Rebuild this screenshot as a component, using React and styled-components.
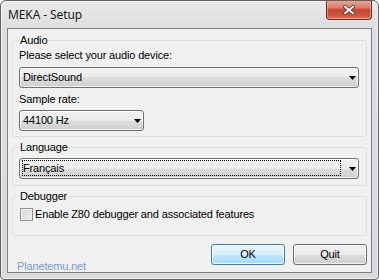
import React from "react";
import styled, { createGlobalStyle } from "styled-components";

const Global = createGlobalStyle`
  html, body { margin: 0; padding: 0; background: #ffffff; }
  #root { width: 379px; height: 280px; }
  * { box-sizing: border-box; }
`;

const Window = styled.div`
  width: 379px;
  height: 280px;
  border: 1px solid #5f6368;
  border-radius: 6px 6px 4px 4px;
  background: linear-gradient(to bottom, #e9e9e9 0px, #dedede 28px, #d9d9d9 100%);
  box-shadow: inset 0 0 0 1px rgba(255, 255, 255, 0.55);
  display: flex;
  flex-direction: column;
  overflow: hidden;
`;

const TitleBar = styled.div`
  height: 27px;
  display: flex;
  align-items: center;
  padding-left: 7px;
  flex-shrink: 0;
`;

const Title = styled.div`
  flex: 1;
  font-family: "Noto Sans", "Open Sans", sans-serif;
  font-size: 12px;
  color: #1a1a1a;
  letter-spacing: -0.1px;
  line-height: 16px;
`;

const CloseButton = styled.div`
  align-self: flex-start;
  margin-top: -1px;
  margin-right: 6px;
  width: 46px;
  height: 20px;
  border: 1px solid #6e2a22;
  border-top: none;
  border-radius: 0 0 4px 4px;
  background: linear-gradient(
    to bottom,
    #e9a99b 0%,
    #dc7d68 40%,
    #c7452d 52%,
    #cf5339 80%,
    #e07a5c 100%
  );
  box-shadow: inset 0 0 0 1px rgba(255, 210, 200, 0.45);
  display: flex;
  align-items: center;
  justify-content: center;
  padding-top: 1px;
`;

const Client = styled.div`
  flex: 1;
  margin: 0 6px 6px 6px;
  border: 1px solid #7d8085;
  background: #f0f0f0;
  display: flex;
  flex-direction: column;
  padding: 5px 4px 0 4px;
  font-family: "Liberation Sans", Arial, sans-serif;
  font-size: 11px;
  letter-spacing: -0.15px;
  color: #000;
`;

const Group = styled.fieldset`
  margin: ${(p) => (p.$first ? "0" : "4px")} 0 0 0;
  padding: ${(p) => p.$pad || "2px 6px 5px 6px"};
  border: 1px solid #d5dfe5;
  border-radius: 3px;
  min-width: 0;
  display: flex;
  flex-direction: column;
  align-items: flex-start;
`;

const Legend = styled.legend`
  padding: 0 1px;
  margin-left: 0;
  line-height: 13px;
  font-size: 11px;
  color: #000;
`;

const FieldLabel = styled.div`
  line-height: 13px;
  margin-top: ${(p) => p.$mt || 0}px;
`;

const SelectBox = styled.div`
  width: ${(p) => p.$width}px;
  height: 21px;
  margin-top: ${(p) => p.$mt || 0}px;
  border: 1px solid #707070;
  border-radius: 3px;
  background: linear-gradient(
    to bottom,
    #f2f2f2 0%,
    #ebebeb 50%,
    #dddddd 50%,
    #cfcfcf 100%
  );
  box-shadow: inset 0 0 0 1px rgba(255, 255, 255, 0.7);
  display: flex;
  align-items: stretch;
  padding: 1px 2px 2px 2px;
`;

const SelectValue = styled.div`
  flex: 1;
  display: flex;
  align-items: center;
  border: 1px dotted ${(p) => (p.$focused ? "#000" : "transparent")};
  line-height: 13px;
  white-space: nowrap;
`;

const ArrowBox = styled.div`
  width: 15px;
  display: flex;
  align-items: center;
  justify-content: flex-end;
  padding-top: 1px;
`;

const CheckRow = styled.label`
  display: flex;
  align-items: center;
  gap: 2px;
  line-height: 13px;
  margin-left: 1px;
`;

const CheckBox = styled.span`
  width: 13px;
  height: 13px;
  border: 1px solid #8e8f8f;
  background: linear-gradient(135deg, #cbcfd5 0%, #e6e8eb 60%, #f6f6f6 100%);
  box-shadow: inset 0 0 0 1px #f4f4f4, inset 0 0 0 2px #d8dbe0;
  flex-shrink: 0;
`;

const Footer = styled.div`
  flex: 1;
  display: flex;
  justify-content: space-between;
  align-items: flex-start;
  padding: 8px 0 0 5px;
`;

const Watermark = styled.div`
  align-self: flex-end;
  color: #7b9bcf;
  line-height: 12px;
  font-size: 11px;
`;

const Buttons = styled.div`
  display: flex;
  gap: 8px;
`;

const Button = styled.div`
  width: 74px;
  height: 21px;
  border: 1px solid ${(p) => (p.$default ? "#3c7fb1" : "#707070")};
  border-radius: 3px;
  background: ${(p) =>
    p.$default
      ? "linear-gradient(to bottom, #eaf6fd 0%, #d9f0fc 50%, #bee6fd 50%, #a7d9f5 100%)"
      : "linear-gradient(to bottom, #f2f2f2 0%, #ebebeb 50%, #dddddd 50%, #cfcfcf 100%)"};
  box-shadow: inset 0 0 0 1px
    ${(p) => (p.$default ? "rgba(255,255,255,0.75)" : "rgba(255,255,255,0.7)")};
  display: flex;
  align-items: center;
  justify-content: center;
  line-height: 13px;
  color: #000;
`;

const Arrow = () => (
  <svg width="7" height="4" viewBox="0 0 7 4">
    <path d="M0 0H7L3.5 4Z" fill="#000" />
  </svg>
);

const Select = ({ width, value, focused, mt }) => (
  <SelectBox $width={width} $mt={mt}>
    <SelectValue $focused={focused}>{value}</SelectValue>
    <ArrowBox>
      <Arrow />
    </ArrowBox>
  </SelectBox>
);

export default function App() {
  return (
    <>
      <Global />
      <Window>
        <TitleBar>
          <Title>MEKA - Setup</Title>
          <CloseButton>
            <svg width="12" height="10" viewBox="0 0 12 10">
              <path
                d="M2 1.8L10 8.2M10 1.8L2 8.2"
                stroke="#3e3e3e"
                strokeWidth="3.4"
                strokeLinecap="square"
              />
              <path
                d="M2 1.8L10 8.2M10 1.8L2 8.2"
                stroke="#ffffff"
                strokeWidth="1.8"
                strokeLinecap="square"
              />
            </svg>
          </CloseButton>
        </TitleBar>
        <Client>
          <Group $first>
            <Legend>Audio</Legend>
            <FieldLabel>Please select your audio device:</FieldLabel>
            <Select width={340} value="DirectSound" mt={5} />
            <FieldLabel $mt={5}>Sample rate:</FieldLabel>
            <Select width={125} value="44100 Hz" mt={4} />
          </Group>
          <Group $pad="4px 6px 6px 6px">
            <Legend>Language</Legend>
            <Select width={340} value="Français" focused />
          </Group>
          <Group $pad="5px 6px 14px 6px">
            <Legend>Debugger</Legend>
            <CheckRow>
              <CheckBox />
              Enable Z80 debugger and associated features
            </CheckRow>
          </Group>
          <Footer>
            <Watermark>Planetemu.net</Watermark>
            <Buttons>
              <Button $default>OK</Button>
              <Button>Quit</Button>
            </Buttons>
          </Footer>
        </Client>
      </Window>
    </>
  );
}
